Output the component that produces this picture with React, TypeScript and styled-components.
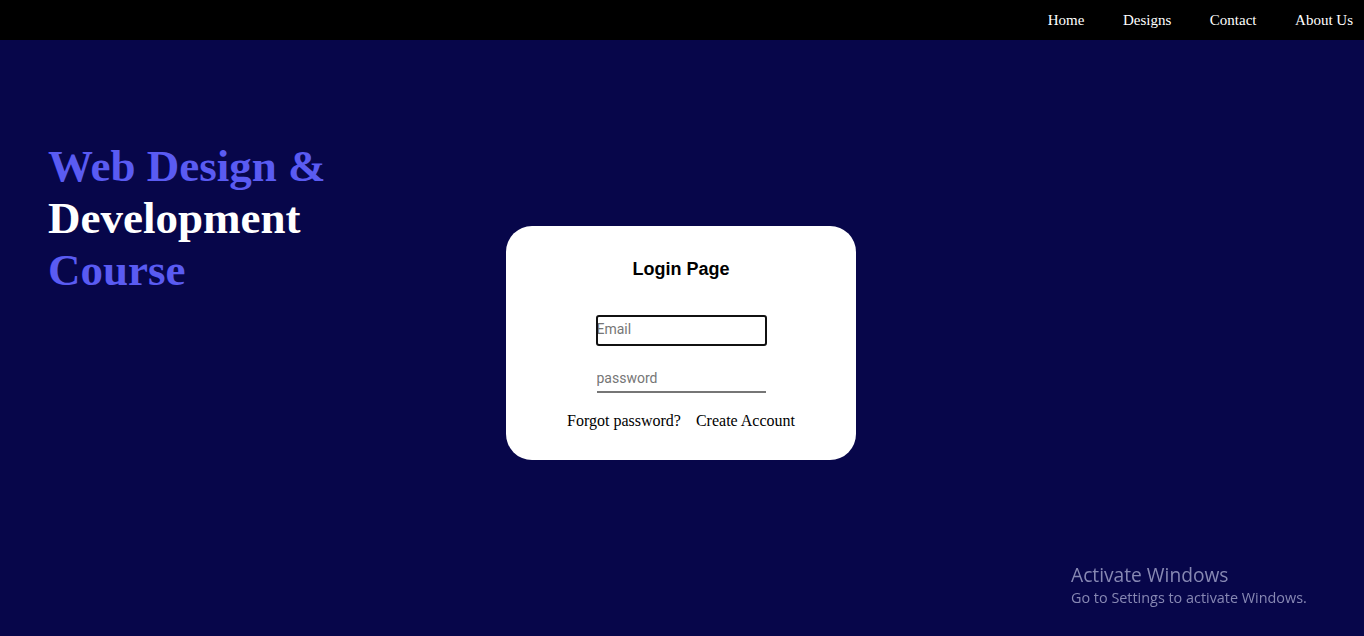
import React from "react";
import styled, { createGlobalStyle } from "styled-components";

const Global = createGlobalStyle`
  html, body { margin: 0; padding: 0; }
  body { background: #07064a; font-family: "Liberation Serif", "Times New Roman", serif; }
`;

const Page = styled.div`
  min-height: 636px;
  display: flex;
  flex-direction: column;
  background: #07064a;
`;

const NavBar = styled.nav`
  height: 40px;
  background: #000;
  display: flex;
  justify-content: flex-end;
  align-items: center;
  padding-right: 11px;
  gap: 38.6px;
`;

const NavLink = styled.a`
  color: #fff;
  font-family: "Liberation Serif", "Times New Roman", serif;
  font-size: 15px;
  text-decoration: none;
  cursor: pointer;
`;

const Main = styled.main`
  flex: 1;
  display: grid;
  grid-template-columns: 506px 350px 1fr;
  align-items: start;
`;

const Hero = styled.h1`
  margin: 0;
  padding: 100px 0 0 48px;
  font-family: "Liberation Serif", "Times New Roman", serif;
  font-weight: bold;
  font-size: 45px;
  line-height: 52px;
`;

const HeroLine = styled.span<{ $accent?: boolean }>`
  display: block;
  color: ${(p) => (p.$accent ? "#5a5bf2" : "#ffffff")};
`;

const Card = styled.form`
  margin-top: 186px;
  height: 234px;
  box-sizing: border-box;
  background: #fff;
  border-radius: 26px;
  display: flex;
  flex-direction: column;
  align-items: center;
  padding-top: 32px;
`;

const Title = styled.h2`
  margin: 0;
  font-family: "Liberation Sans", Arial, sans-serif;
  font-weight: bold;
  font-size: 18px;
  line-height: 22px;
  color: #000;
`;

const EmailInput = styled.input`
  margin-top: 35px;
  width: 171px;
  height: 31px;
  box-sizing: border-box;
  border: 2px solid #111;
  border-radius: 3px;
  padding: 0 0 3px 0;
  text-indent: -1px;
  font-family: Roboto, "Liberation Sans", sans-serif;
  font-size: 14px;
  outline: none;
  &::placeholder { color: #767676; }
`;

const PasswordInput = styled.input`
  margin-top: 18px;
  width: 169px;
  height: 29px;
  box-sizing: border-box;
  border: none;
  border-bottom: 2px solid #767676;
  padding: 0;
  font-family: Roboto, "Liberation Sans", sans-serif;
  font-size: 14px;
  outline: none;
  &::placeholder { color: #767676; }
`;

const LinkRow = styled.div`
  margin-top: 19px;
  display: flex;
  gap: 15px;
`;

const CardLink = styled.a`
  font-family: "Liberation Serif", "Times New Roman", serif;
  font-size: 16px;
  color: #000;
  text-decoration: none;
  cursor: pointer;
`;

const Watermark = styled.div`
  position: fixed;
  left: 1071px;
  top: 563px;
  font-family: "Open Sans", "Noto Sans", sans-serif;
  color: #8788b3;
`;

const WmTitle = styled.div`
  font-size: 19.2px;
  line-height: 24px;
`;

const WmSub = styled.div`
  font-size: 14.4px;
  line-height: 22px;
`;

export default function App() {
  return (
    <>
      <Global />
      <Page>
        <NavBar>
          <NavLink>Home</NavLink>
          <NavLink>Designs</NavLink>
          <NavLink>Contact</NavLink>
          <NavLink>About Us</NavLink>
        </NavBar>
        <Main>
          <Hero>
            <HeroLine $accent>Web Design &amp;</HeroLine>
            <HeroLine>Development</HeroLine>
            <HeroLine $accent>Course</HeroLine>
          </Hero>
          <Card onSubmit={(e) => e.preventDefault()}>
            <Title>Login Page</Title>
            <EmailInput type="email" placeholder="Email" />
            <PasswordInput type="password" placeholder="password" />
            <LinkRow>
              <CardLink>Forgot password?</CardLink>
              <CardLink>Create Account</CardLink>
            </LinkRow>
          </Card>
          <div />
        </Main>
        <Watermark>
          <WmTitle>Activate Windows</WmTitle>
          <WmSub>Go to Settings to activate Windows.</WmSub>
        </Watermark>
      </Page>
    </>
  );
}
